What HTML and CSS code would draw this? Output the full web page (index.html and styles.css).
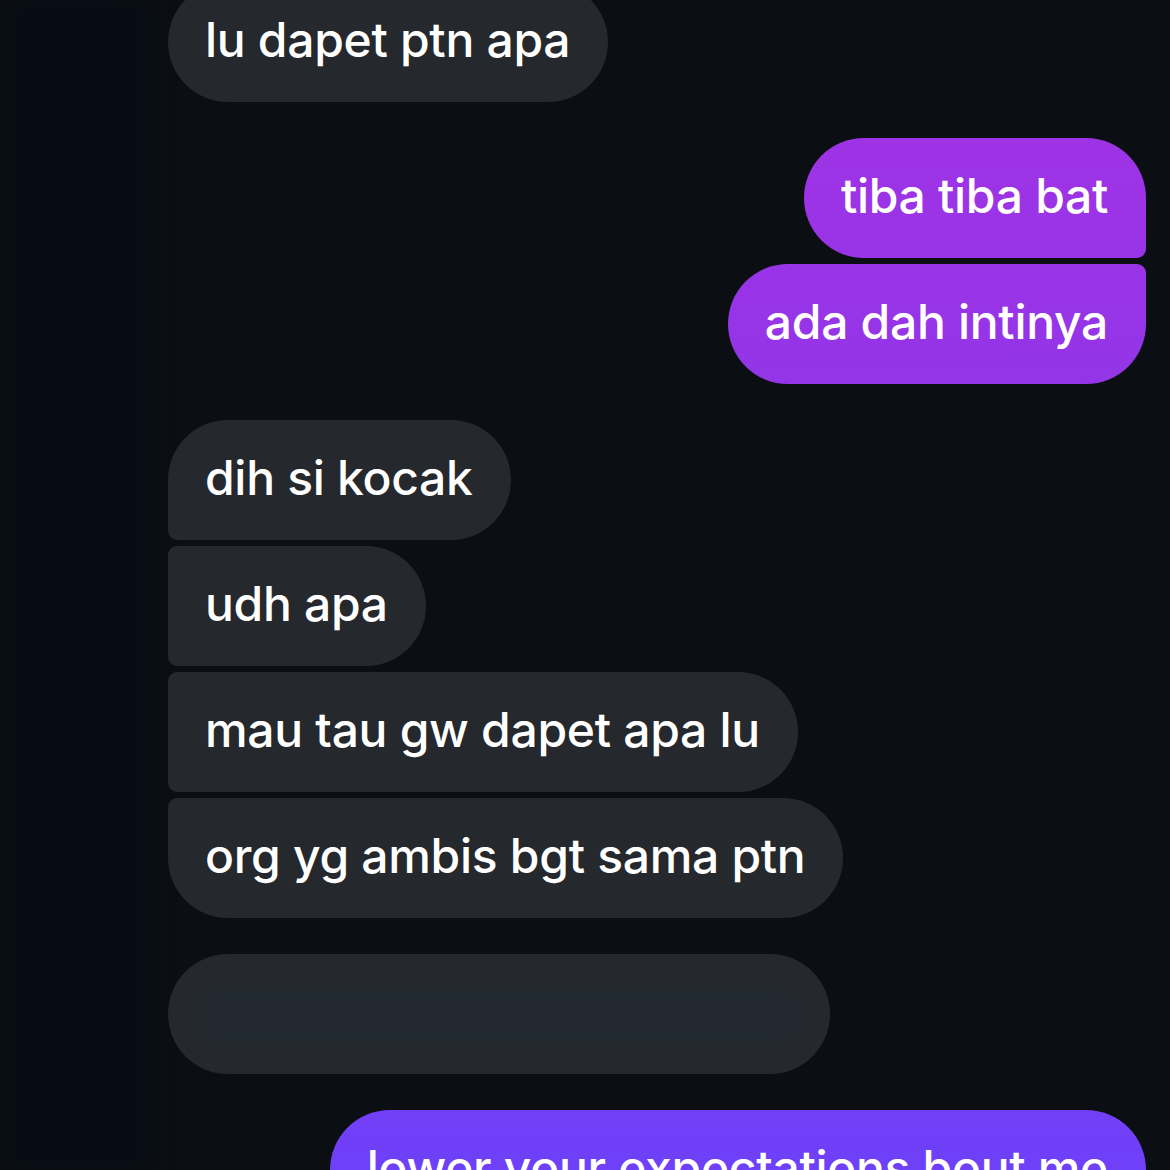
FILE: index.html
```html
<!DOCTYPE html>
<html lang="en">
<head>
  <meta charset="UTF-8">
  <meta name="viewport" content="width=device-width, initial-scale=1.0">
  <title>Chat</title>
  <link rel="stylesheet" href="styles.css">
</head>
<body>
  <div class="shade"></div>
  <div class="chat">
    <div class="group theirs">
      <div class="bubble">lu dapet ptn apa</div>
    </div>

    <div class="group mine">
      <div class="bubble">tiba tiba bat</div>
      <div class="bubble">ada dah intinya</div>
    </div>

    <div class="group theirs">
      <div class="bubble">dih si kocak</div>
      <div class="bubble">udh apa</div>
      <div class="bubble">mau tau gw dapet apa lu</div>
      <div class="bubble">org yg ambis bgt sama ptn</div>
    </div>

    <div class="group theirs">
      <div class="bubble hidden-msg"><span class="blur"></span></div>
    </div>

    <div class="group mine">
      <div class="bubble">lower your expectations bout me</div>
    </div>
  </div>
</body>
</html>
```

FILE: styles.css
```css
html, body {
  overflow: hidden;
}
body {
  margin: 0;
  height: 1170px;
  background-color: #0b0f13;
  color: #fff;
  font-family: Inter, "Noto Sans", sans-serif;
}
/* darker patch on the left edge */
.shade {
  position: absolute;
  left: 8px;
  top: 0;
  width: 140px;
  height: 1170px;
  background: #070c14;
  filter: blur(12px);
}
.chat {
  position: relative;
  display: flex;
  flex-direction: column;
  gap: 36px;
  margin-top: -18px;
  padding: 0 24px 0 168px;
}
.group {
  display: flex;
  flex-direction: column;
  gap: 6px;
}
.theirs {
  align-items: flex-start;
}
.mine {
  align-items: flex-end;
}
.bubble {
  box-sizing: border-box;
  height: 120px;
  display: flex;
  align-items: center;
  padding: 0 38px 5px 37px;
  border-radius: 60px;
  font-size: 48px;
  font-weight: 500;
  letter-spacing: -0.3px;
  white-space: nowrap;
}
.theirs .bubble {
  background-color: #25282c;
}
.mine .bubble {
  background: linear-gradient(180deg, #a432e4 0px, #9335e8 400px, #6e40f8 1170px) fixed;
}

/* grouped corners */
.theirs .bubble:not(:last-child) {
  border-bottom-left-radius: 9px;
}
.theirs .bubble:not(:first-child) {
  border-top-left-radius: 9px;
}
.mine .bubble:not(:last-child) {
  border-bottom-right-radius: 9px;
}
.mine .bubble:not(:first-child) {
  border-top-right-radius: 9px;
}

.hidden-msg {
  position: relative;
  width: 662px;
  overflow: hidden;
}
.blur {
  position: absolute;
  left: 30px;
  right: 30px;
  top: 32px;
  bottom: 28px;
  background: #222930;
  border-radius: 20px;
  filter: blur(8px);
}
```
